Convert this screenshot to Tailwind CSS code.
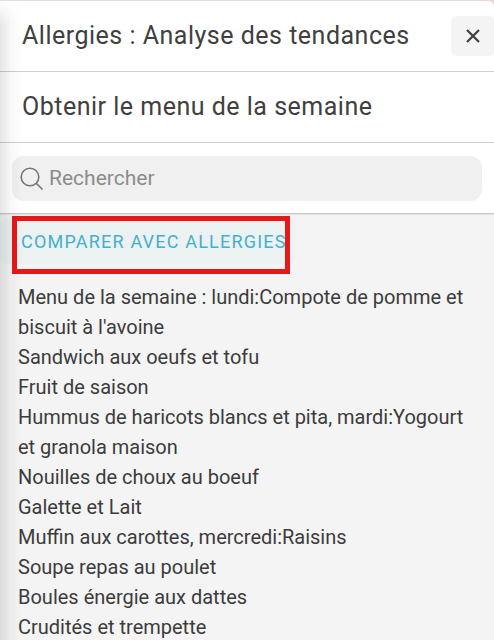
<!DOCTYPE html>
<html lang="fr">
<head>
    <meta charset="UTF-8">
    <meta name="viewport" content="width=device-width, initial-scale=1.0">
    <title>Allergies : Analyse des tendances</title>
    <script src="https://cdn.jsdelivr.net/npm/@tailwindcss/browser@4"></script>
</head>
<body class="bg-[#ead9d9] font-[Roboto,sans-serif] text-[#404040] overflow-hidden">
    <div class="relative h-screen pt-px overflow-hidden">
        <div class="flex flex-col h-full bg-[#f4f4f4] rounded-tr-md overflow-hidden">
            <header class="flex items-center justify-between shrink-0 h-[71px] pl-[22px] bg-white border-b border-[#cfcfcf]">
                <h1 class="text-[25px] tracking-[0.5px] whitespace-nowrap">Allergies : Analyse des tendances</h1>
                <button type="button" aria-label="Fermer" class="flex items-center w-[43px] h-10 pl-[15px] bg-[#f4f4f4] rounded-l-md rounded-r-sm">
                    <svg class="w-[14px] h-[14px]" viewBox="0 0 14 14" fill="none" stroke="#404040" stroke-width="2.2">
                        <path d="M1 1l12 12M13 1L1 13"/>
                    </svg>
                </button>
            </header>
            <div class="flex items-center shrink-0 h-[71px] pl-[22px] bg-white border-b border-[#cfcfcf]">
                <h2 class="text-[25px] tracking-[0.5px] whitespace-nowrap">Obtenir le menu de la semaine</h2>
            </div>
            <div class="shrink-0 h-[71px] px-3 pt-[13px] bg-white border-b border-[#c8c8c8] shadow-[0_1px_0_#e4e4e4] z-10">
                <label class="flex items-center h-[45px] pl-2 bg-[#f0f0f0] rounded-xl text-[#8c8c8c]">
                    <svg class="w-6 h-6" viewBox="0 0 24 24" fill="none" stroke="#757575" stroke-width="1.6">
                        <circle cx="10" cy="10" r="8.8"/>
                        <path d="M16.2 16.2l6.3 6.3"/>
                    </svg>
                    <span class="pl-[5px] text-[21px]">Rechercher</span>
                </label>
            </div>
            <main class="pt-[5px]">
                <div class="relative flex items-center w-[295px] h-[45px] pl-[21px] bg-[#ecf1f1] rounded-md">
                    <span class="text-[18px] tracking-[1.2px] text-[#45b0cd] whitespace-nowrap">COMPARER AVEC ALLERGIES</span>
                    <div class="absolute left-3 -top-[3px] w-[278px] h-[58px] border-[5px] border-[#e81818]"></div>
                </div>
                <p class="pt-[18px] pl-[18px] text-[20px] leading-[30px] whitespace-nowrap text-[#3c3c3c]">
                    Menu de la semaine : lundi:Compote de pomme et<br>
                    biscuit à l'avoine<br>
                    Sandwich aux oeufs et tofu<br>
                    Fruit de saison<br>
                    Hummus de haricots blancs et pita, mardi:Yogourt<br>
                    et granola maison<br>
                    Nouilles de choux au boeuf<br>
                    Galette et Lait<br>
                    Muffin aux carottes, mercredi:Raisins<br>
                    Soupe repas au poulet<br>
                    Boules énergie aux dattes<br>
                    Crudités et trempette
                </p>
            </main>
        </div>
        <!-- shade along the left edge -->
        <div class="absolute left-0 top-px bottom-0 w-[22px] z-20 bg-linear-to-r from-black/10 via-black/3 to-transparent mask-t-from-[calc(100%-24px)] pointer-events-none"></div>
    </div>
</body>
</html>
